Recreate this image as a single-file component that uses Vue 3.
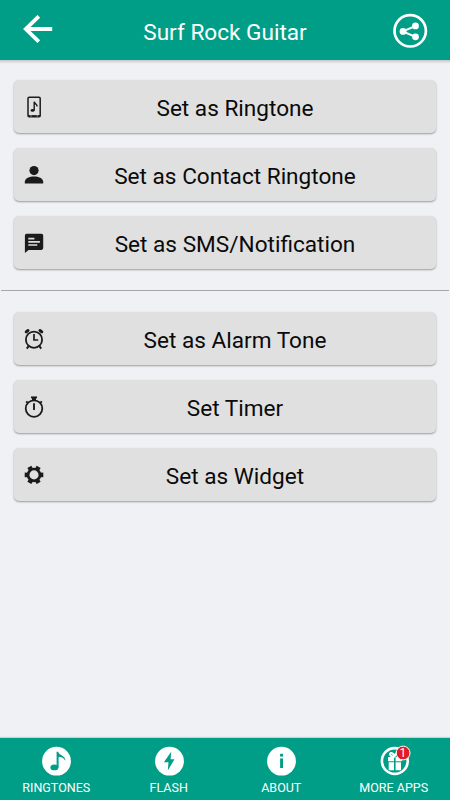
<template>
  <div class="screen">
    <header class="top-bar">
      <button class="icon-btn back" aria-label="Back">
        <svg width="31" height="28" viewBox="0 0 31 28">
          <path d="M16.8 1.3 3.8 14l13 12.7M4 14h26.2" fill="none" stroke="#fff" stroke-width="3.8" />
        </svg>
      </button>
      <h1>{{ title }}</h1>
      <button class="icon-btn share" aria-label="Share">
        <svg width="36" height="36" viewBox="0 0 36 36">
          <circle cx="18.2" cy="17.8" r="15.7" fill="none" stroke="#fff" stroke-width="2.7" />
          <path d="M23.5 13 10.8 18.4l12.7 5.4" fill="none" stroke="#fff" stroke-width="2" />
          <circle cx="11" cy="18.4" r="3.4" fill="#fff" />
          <circle cx="23.5" cy="12.9" r="3.4" fill="#fff" />
          <circle cx="23.5" cy="23.8" r="3.4" fill="#fff" />
        </svg>
      </button>
    </header>

    <main class="content">
      <section v-for="(group, i) in groups" :key="i" class="group">
        <button v-for="item in group" :key="item.icon" class="action">
          <svg class="action-icon" width="20" height="24" viewBox="0 0 20 24">
            <g v-if="item.icon === 'phone'">
              <rect x="4" y="2.2" width="12.2" height="19.6" rx="1.2" fill="none" stroke="#1b1b1b" stroke-width="1.5" />
              <path d="M4 20.1h12.2V22H4z" fill="#1b1b1b" />
              <path d="M6.3 21h1.3M12.6 21h1.3" stroke="#ddd" stroke-width="0.8" />
              <ellipse cx="8.6" cy="15.4" rx="2" ry="1.3" fill="#1b1b1b" />
              <path d="M10.2 15.5V6.7c.4 2 2.8 2.2 3 4.8" fill="none" stroke="#1b1b1b" stroke-width="1.4" />
            </g>
            <g v-else-if="item.icon === 'person'" fill="#1b1b1b">
              <circle cx="10" cy="7.6" r="4.6" />
              <path d="M.8 20.6v-1.8c0-3.6 4.8-5.4 9.2-5.4s9.2 1.8 9.2 5.4v1.8z" />
            </g>
            <g v-else-if="item.icon === 'message'">
              <path d="M3 2.7h14.4a1.8 1.8 0 0 1 1.8 1.8v12.6a1.8 1.8 0 0 1-1.8 1.8H4.5L.9 22V4.6A1.9 1.9 0 0 1 3 2.7z" fill="#1b1b1b" />
              <path d="M4.3 7.6h6.1M4.3 10.9h11.6M4.3 14h9" stroke="#ddd" stroke-width="1.7" />
            </g>
            <g v-else-if="item.icon === 'alarm'" fill="none" stroke="#1b1b1b">
              <circle cx="10" cy="12.7" r="8.1" stroke-width="1.8" />
              <path d="M10 7v6h4.2" stroke-width="1.7" />
              <path d="M2.2 4.9 4 3.5M17.8 4.9 16 3.5" stroke-width="3" stroke-linecap="round" />
              <path d="m4.7 19-1.9 2.7M15.3 19l1.9 2.7" stroke-width="2" />
            </g>
            <g v-else-if="item.icon === 'timer'" fill="none" stroke="#1b1b1b">
              <circle cx="10" cy="13.6" r="8.3" stroke-width="1.8" />
              <path d="M10 8.2v6.8" stroke-width="1.9" />
              <path d="M7 2.4h6" stroke-width="1.9" />
              <path d="M10 2.4v3.4" stroke-width="4" />
              <path d="m2.2 6.4 2 2M17.8 6.4l-2 2" stroke-width="1.9" />
            </g>
            <g v-else fill="none" stroke="#1b1b1b">
              <circle cx="10" cy="11.9" r="5.9" stroke-width="2.7" />
              <path
                v-for="angle in [0, 60, 120, 180, 240, 300]"
                :key="angle"
                d="M16 11.9h3.3"
                stroke-width="4.6"
                :transform="`rotate(${angle} 10 11.9)`"
              />
            </g>
          </svg>
          <span class="action-label">{{ item.label }}</span>
        </button>
      </section>
    </main>

    <nav class="bottom-bar">
      <a v-for="tab in tabs" :key="tab.icon" class="tab">
        <svg width="34" height="32" viewBox="0 0 34 32">
          <circle v-if="tab.icon !== 'gift'" cx="17.5" cy="16.2" r="14.4" fill="#fff" />
          <g v-if="tab.icon === 'note'" fill="#009e87">
            <ellipse cx="15.4" cy="22.4" rx="4" ry="2.9" />
            <path d="M17.6 22.6V6.8h1.6c.6 3.7 7.2 3.4 7.2 9-2-3.3-4.4-4-6.8-4.1v10.9z" />
          </g>
          <path v-else-if="tab.icon === 'bolt'" d="m19.2 6.8-7.3 10.4h4.6l-.7 8.2 6.7-11.2h-3.9z" fill="#009e87" />
          <g v-else-if="tab.icon === 'info'" fill="#009e87">
            <rect x="16.1" y="8.8" width="2.9" height="2.8" />
            <rect x="16.1" y="13.4" width="2.9" height="9.6" />
          </g>
          <g v-else>
            <circle cx="17.8" cy="16" r="12.9" fill="none" stroke="#fff" stroke-width="2.6" />
            <path d="M11 12h6v4.3h-6zM18.6 12h6.2v4.3h-6.2zM11.7 17.3H17v7.9h-5.3zM18.6 17.3H24v7.9h-5.4z" fill="#fff" />
            <path d="M17.4 12c-4.4.2-5.6-4.2-3-3.9 1.7.2 2.6 2.1 3 3.9.4-2.3 1.3-3.8 2.8-4" fill="none" stroke="#fff" stroke-width="2" />
            <circle cx="26.1" cy="8" r="6.9" fill="#e21b22" stroke="#fff" stroke-width="1" />
            <text x="25.8" y="12.3" class="badge">1</text>
          </g>
        </svg>
        <span>{{ tab.label }}</span>
      </a>
    </nav>
  </div>
</template>

<script setup>
import { ref } from 'vue'

const title = ref('Surf Rock Guitar')

const groups = [
  [
    { icon: 'phone', label: 'Set as Ringtone' },
    { icon: 'person', label: 'Set as Contact Ringtone' },
    { icon: 'message', label: 'Set as SMS/Notification' }
  ],
  [
    { icon: 'alarm', label: 'Set as Alarm Tone' },
    { icon: 'timer', label: 'Set Timer' },
    { icon: 'gear', label: 'Set as Widget' }
  ]
]

const tabs = [
  { icon: 'note', label: 'RINGTONES' },
  { icon: 'bolt', label: 'FLASH' },
  { icon: 'info', label: 'ABOUT' },
  { icon: 'gift', label: 'MORE APPS' }
]
</script>

<style>
body {
  margin: 0;
}
</style>

<style scoped>
.screen {
  display: flex;
  flex-direction: column;
  height: 100vh;
  overflow: hidden;
  background: #f0f1f4;
  font-family: Roboto, sans-serif;
}

button {
  border: none;
  font-family: inherit;
}

.top-bar {
  display: flex;
  align-items: center;
  justify-content: space-between;
  box-sizing: border-box;
  height: 60px;
  flex: none;
  padding: 0 22px;
  background: #009e87;
  box-shadow: 0 1px 2px 1px #cbc9cd;
}

.top-bar h1 {
  margin: 5px 0 0;
  color: #fff;
  font-size: 22.6px;
  font-weight: 400;
  line-height: 26px;
}

.icon-btn {
  display: flex;
  width: 36px;
  padding: 0;
  background: none;
}

.back {
  margin-bottom: 2px;
}

.share {
  margin-top: 2px;
}

.content {
  flex: 1;
}

.group {
  display: flex;
  flex-direction: column;
  gap: 15px;
  padding: 20px 14px 21px;
}

/* divider between the two groups */
.group + .group {
  margin: 0 1px;
  padding: 21px 13px 0;
  border-top: 1px solid #a5a7a9;
}

.action {
  display: flex;
  align-items: center;
  height: 53px;
  padding: 0 10px;
  border-radius: 5px;
  background: #e0e0e0;
  box-shadow: 0 1px 2px rgba(0, 0, 0, 0.36);
  color: #0a0a0a;
}

.action-icon {
  flex: none;
}

.action-label {
  flex: 1;
  padding-top: 4px;
  font-size: 22.6px;
  line-height: 26px;
  text-align: center;
}

.bottom-bar {
  display: flex;
  flex: none;
  height: 62px;
  background: #009e87;
  box-shadow: 0 -1px 1px #cdd0d1;
}

.tab {
  display: flex;
  flex: 1;
  flex-direction: column;
  align-items: center;
  padding-top: 7px;
  color: #fff;
  font-size: 12.5px;
  line-height: 22px;
}

.badge {
  fill: #fff;
  font-size: 12px;
  text-anchor: middle;
}
</style>
